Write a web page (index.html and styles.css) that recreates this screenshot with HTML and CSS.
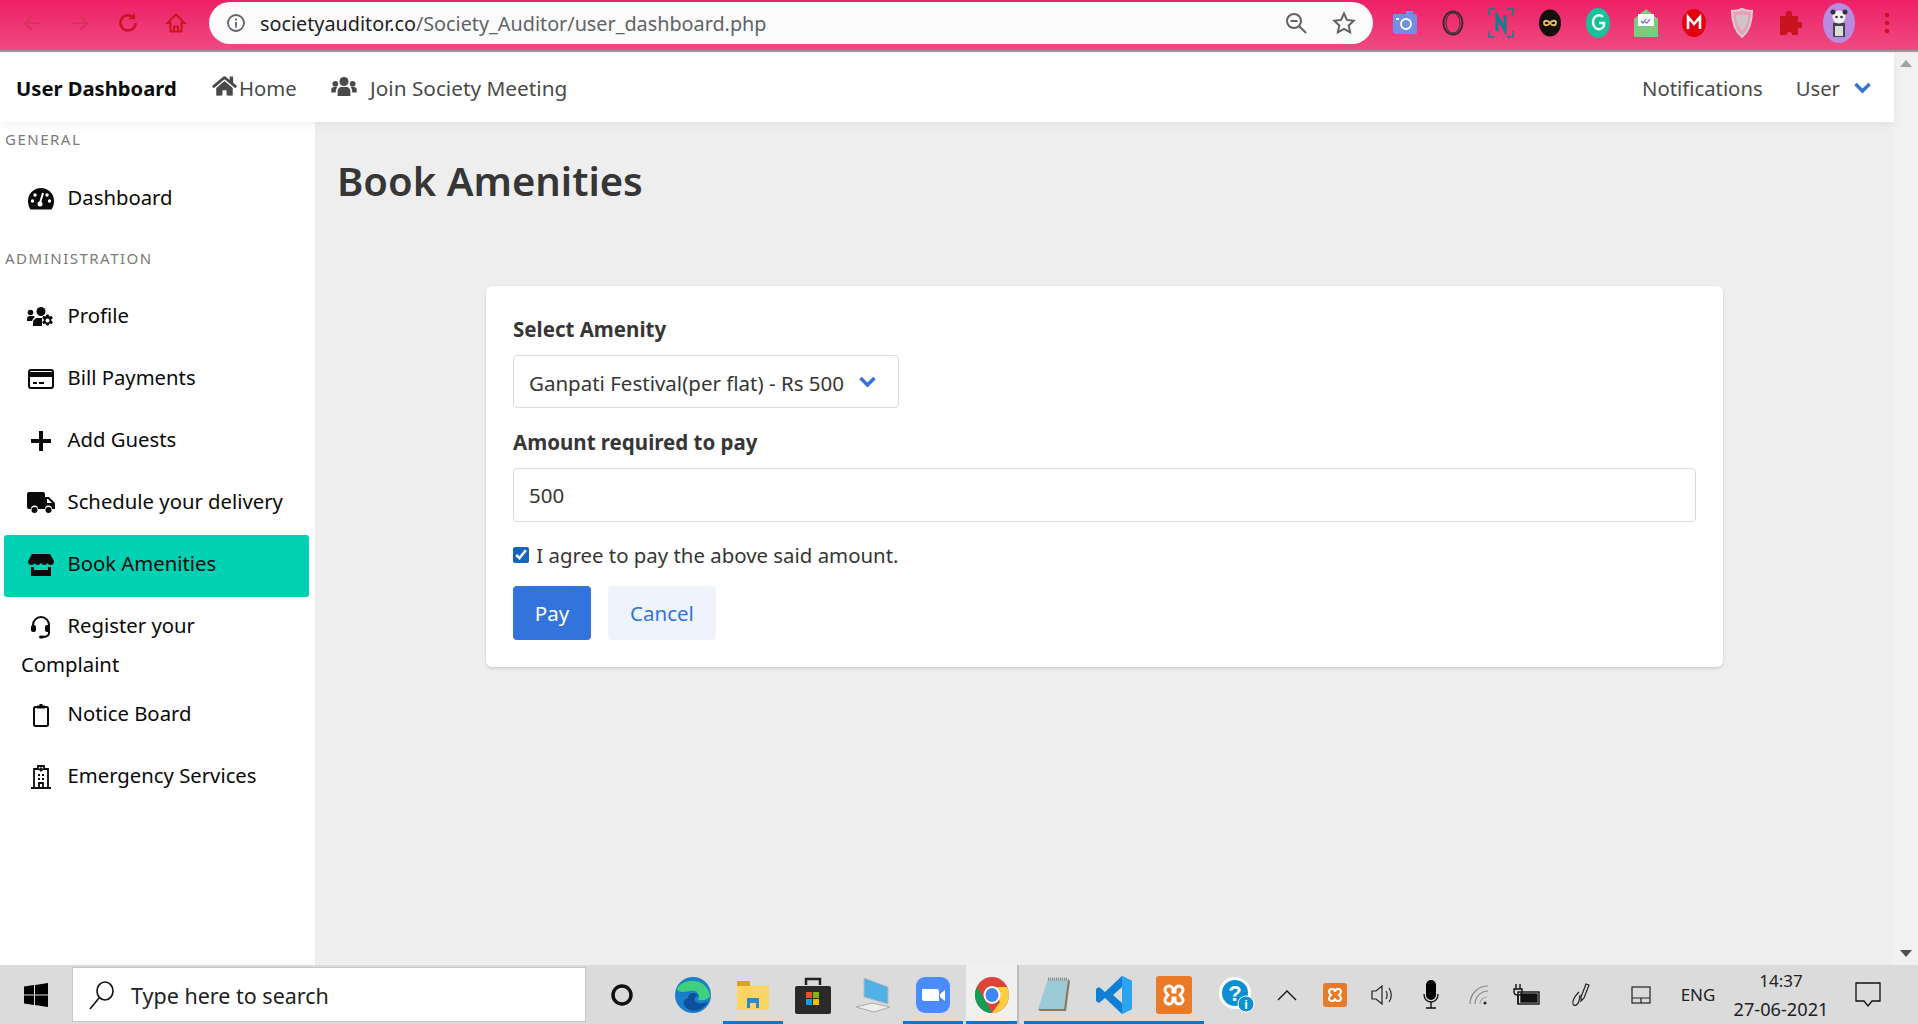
FILE: index.html
```html
<!DOCTYPE html>
<html lang="en">
<head>
    <meta charset="UTF-8">
    <title>User Dashboard</title>
    <link rel="stylesheet" href="styles.css">
</head>
<body>

    <!-- browser toolbar -->
    <div class="chrome-bar">
        <div class="tb-btn"><svg width="22" height="22" viewBox="0 0 22 22" fill="none" stroke="#dd3060" stroke-width="2"><path d="M19 11H4M11 4l-7 7 7 7"/></svg></div>
        <div class="tb-btn"><svg width="22" height="22" viewBox="0 0 22 22" fill="none" stroke="#dd3060" stroke-width="2"><path d="M3 11h15M11 4l7 7-7 7"/></svg></div>
        <div class="tb-btn"><svg width="24" height="24" viewBox="0 0 22 22" fill="none" stroke="#c9141f" stroke-width="2.200"><path d="M18 11a7 7 0 1 1-2-5"/><path d="M17.500 1.500v6h-6z" fill="#c9141f" stroke="none"/></svg></div>
        <div class="tb-btn"><svg width="22" height="24" viewBox="0 0 22 22" fill="none" stroke="#c9141f" stroke-width="2"><path d="M11 2.500L2.500 11H5.500v8.500h11V11h3zM9 19.500v-5h4v5"/></svg></div>
        <div class="omnibox">
            <svg width="20" height="20" viewBox="0 0 20 20" fill="none" stroke="#5f6368" stroke-width="1.800"><circle cx="10" cy="10" r="8"/><path d="M10 9v5.500M10 5.500v2"/></svg>
            <span class="url"><b>societyauditor.co</b>/Society_Auditor/user_dashboard.php</span>
            <svg class="omni-zoom" width="24" height="24" viewBox="0 0 24 24" fill="none" stroke="#5f6368" stroke-width="2"><circle cx="10" cy="10" r="7"/><path d="M6.500 10h7M15 15l7 7"/></svg>
            <svg class="omni-star" width="24" height="24" viewBox="0 0 24 24" fill="none" stroke="#5f6368" stroke-width="2"><path d="M12 2.500l2.900 6.400 6.900.8-5.100 4.700 1.400 6.900-6.100-3.500-6.100 3.500 1.400-6.900-5.100-4.700 6.900-.8z"/></svg>
        </div>
        <div class="extensions">
            <div class="ext"><svg width="24" height="24" viewBox="0 0 24 24"><rect x="0" y="3" width="24" height="20" rx="2" fill="#6f8fe8"/><rect x="13" y="0" width="7" height="4" fill="#6f8fe8"/><circle cx="13" cy="13" r="5" fill="none" stroke="#fff" stroke-width="2"/><rect x="3" y="7" width="3" height="2" fill="#fff"/></svg></div>
            <div class="ext"><svg width="22" height="26" viewBox="0 0 22 26" fill="none" stroke="#3a2a32" stroke-width="2"><ellipse cx="11" cy="13" rx="9.500" ry="11.500"/><ellipse cx="11" cy="13" rx="7" ry="10" stroke-width="1"/></svg></div>
            <div class="ext"><svg width="26" height="30" viewBox="0 0 26 30" fill="none"><path d="M1 7V1h6M19 1h6v6M25 23v6h-6M7 29H1v-6" stroke="#0f7f8c" stroke-width="1.500"/><path d="M9 23V8l8 14V7" stroke="#0f7f8c" stroke-width="3"/></svg></div>
            <div class="ext"><svg width="24" height="28" viewBox="0 0 24 28"><ellipse cx="12" cy="14" rx="11" ry="13.500" fill="#14110d"/><path d="M12 14c-2-3-6-3-6 0s4 3 6 0 6-3 6 0-4 3-6 0z" fill="none" stroke="#e8c15a" stroke-width="1.800"/></svg></div>
            <div class="ext"><svg width="24" height="30" viewBox="0 0 24 30"><ellipse cx="12" cy="15" rx="12" ry="15" fill="#15c39a"/><path d="M17 9a6 7 0 1 0 1 9v-3h-5" fill="none" stroke="#fff" stroke-width="2.400"/></svg></div>
            <div class="ext"><svg width="24" height="28" viewBox="0 0 24 28"><path d="M0 10L12 0l12 10v18H0z" fill="#7fc97f"/><rect x="4" y="5" width="16" height="12" fill="#fff"/><path d="M7 12l2 2 3-4M11 13l2 1 3-4" fill="none" stroke="#5b63d3" stroke-width="1.200"/></svg></div>
            <div class="ext"><svg width="24" height="28" viewBox="0 0 24 28"><ellipse cx="12" cy="14" rx="12" ry="14" fill="#e3000f"/><path d="M6 20V8l6 7 6-7v12" fill="none" stroke="#fff" stroke-width="2.600"/></svg></div>
            <div class="ext"><svg width="22" height="30" viewBox="0 0 22 30"><path d="M11 1c4 2 7 2 10 2 0 12-3 20-10 26C4 23 1 15 1 3c3 0 6 0 10-2z" fill="#e9a0b4" stroke="#d0d0d0" stroke-width="2"/><path d="M5 7h12c0 7-2 12-6 16-4-4-6-9-6-16z" fill="#d0c4c8"/></svg></div>
            <div class="ext"><svg width="22" height="26" viewBox="0 0 22 26"><path d="M0 6h6c-2-7 8-7 6 0h6v6c7-2 7 8 0 6v7h-6c1-4-6-4-5 0H0z" fill="#c9141f"/></svg></div>
            <div class="ext"><svg width="32" height="40" viewBox="0 0 32 40"><ellipse cx="16" cy="20" rx="16" ry="20" fill="#b98ae2"/><rect x="10" y="20" width="12" height="14" fill="#444"/><rect x="12" y="23" width="8" height="10" fill="#ddd"/><circle cx="16" cy="14" r="6.500" fill="#f2f2f2"/><circle cx="10" cy="9" r="2.500" fill="#333"/><circle cx="22" cy="9" r="2.500" fill="#333"/><circle cx="13.500" cy="14" r="1.300" fill="#333"/><circle cx="18.500" cy="14" r="1.300" fill="#333"/></svg></div>
            <div class="ext"><svg width="6" height="24" viewBox="0 0 6 24" fill="#c9141f"><circle cx="3" cy="4" r="2.300"/><circle cx="3" cy="12" r="2.300"/><circle cx="3" cy="20" r="2.300"/></svg></div>
        </div>
    </div>

    <div class="viewport">
        <div class="page">
            <nav class="navbar">
                <div class="brand">User Dashboard</div>
                <a class="nav-link nav-home"><svg width="25" height="22" viewBox="0 0 576 512" fill="#4a4a4a"><path d="M280.37 148.26L96 300.11V464a16 16 0 0 0 16 16l112.06-.29a16 16 0 0 0 15.92-16V368a16 16 0 0 1 16-16h64a16 16 0 0 1 16 16v95.64a16 16 0 0 0 16 16.05L464 480a16 16 0 0 0 16-16V300L295.67 148.26a12.19 12.19 0 0 0-15.3 0zM571.6 251.47L488 182.56V44.05a12 12 0 0 0-12-12h-56a12 12 0 0 0-12 12v72.61L318.47 43a48 48 0 0 0-61 0L4.34 251.47a12 12 0 0 0-1.6 16.9l25.5 31A12 12 0 0 0 45.15 301l235.22-193.74a12.19 12.19 0 0 1 15.3 0L530.9 301a12 12 0 0 0 16.9-1.6l25.5-31a12 12 0 0 0-1.7-16.93z"/></svg>Home</a>
                <a class="nav-link nav-join"><svg width="28" height="20" viewBox="0 0 28 22" fill="#4a4a4a"><circle cx="14" cy="5" r="5"/><circle cx="4.500" cy="7.500" r="3.200"/><circle cx="23.500" cy="7.500" r="3.200"/><path d="M7 21v-5c0-3 2-5 4-5h6c2 0 4 2 4 5v5z"/><path d="M0 17v-3c0-2 1-3 3-3h4c-1.500 1-2 3-2 5v1zM28 17v-3c0-2-1-3-3-3h-4c1.500 1 2 3 2 5v1z"/></svg>Join Society Meeting</a>
                <div class="nav-right">
                    <a class="nav-link">Notifications</a>
                    <a class="nav-link nav-user">User<svg width="17" height="12" viewBox="0 0 17 12" fill="none" stroke="#3273dc" stroke-width="3.500"><path d="M1.500 2l7 7 7-7"/></svg></a>
                </div>
            </nav>

            <div class="content">
                <aside class="sidebar">
                    <p class="menu-label">General</p>
                    <ul class="menu-list">
                        <li><a><span class="icon"><svg width="26" height="22" viewBox="0 0 26 22"><path d="M13 0a13 13 0 0 0-13 13c0 3 .8 6 2.500 8.500h21c1.700-2.500 2.500-5.500 2.500-8.500A13 13 0 0 0 13 0z"/><g fill="#fff"><circle cx="4.500" cy="13" r="1.700"/><circle cx="7" cy="7" r="1.700"/><circle cx="21.500" cy="13" r="1.700"/><circle cx="19" cy="7" r="1.700"/></g><path d="M15 5l-3 10" stroke="#fff" stroke-width="2"/><circle cx="12" cy="16" r="2.500" fill="#fff"/></svg></span>Dashboard</a></li>
                    </ul>
                    <p class="menu-label">Administration</p>
                    <ul class="menu-list">
                        <li><a><span class="icon"><svg width="28" height="20" viewBox="0 0 28 20"><circle cx="14" cy="4.500" r="4.500"/><circle cx="3.500" cy="5.500" r="2.800"/><path d="M0 14v-2c0-2 1-3 3-3h3c1 0 1.500 .5 2 1-1.500 1-2.500 2.500-3 4zM6 19v-3c0-3 2-5 5-5h4v8z"/><path d="M21.500 7.500l1 2 2.300-.6 1 2-1.600 1.600 0 1 1.600 1.600-1 2-2.300-.6-1 2h-2l-1-2-2.300.6-1-2 1.600-1.600 0-1-1.600-1.600 1-2 2.300.6 1-2z"/><circle cx="20.500" cy="13.500" r="2" fill="#fff"/></svg></span>Profile</a></li>
                        <li><a><span class="icon"><svg width="26" height="20" viewBox="0 0 26 20"><rect x="1" y="1" width="24" height="18" rx="2" fill="#fff" stroke="#0a0a0a" stroke-width="2"/><rect x="1" y="3" width="24" height="5"/><rect x="5" y="13" width="4" height="2"/><rect x="11" y="13" width="5" height="2"/></svg></span>Bill Payments</a></li>
                        <li><a><span class="icon"><svg width="20" height="20" viewBox="0 0 20 20"><path d="M8 0h4v8h8v4h-8v8H8v-8H0V8h8z"/></svg></span>Add Guests</a></li>
                        <li><a><span class="icon"><svg width="28" height="22" viewBox="0 0 28 22"><path d="M0 2a2 2 0 0 1 2-2h14a2 2 0 0 1 2 2v3h4l6 6v6h-3a3.500 3.500 0 0 0-7 0h-7a3.500 3.500 0 0 0-7 0H2a2 2 0 0 1-2-2zM20 7v4h5l-4-4z"/><circle cx="7.500" cy="18" r="3"/><circle cx="21.500" cy="18" r="3"/></svg></span>Schedule your delivery</a></li>
                        <li class="is-active"><a><span class="icon"><svg width="26" height="22" viewBox="0 0 26 22"><path d="M4 0h18l4 7c0 2-1 4-3 4s-3-1-3.500-2c-.5 1-2 2-3.300 2S14 10 13 9c-1 1-2 2-3.200 2S7 10 6.500 9C6 10 5 11 3 11S0 9 0 7z"/><path d="M3 13h3v3h14v-3h3v9H3z"/></svg></span>Book Amenities</a></li>
                        <li><a><span class="icon"><svg width="22" height="24" viewBox="0 0 22 24" fill="none" stroke="#0a0a0a" stroke-width="2"><path d="M3 13V10a8 8 0 0 1 16 0v3"/><path d="M19 13v5c0 3-3 4-7 4"/><rect x="1" y="10" width="5" height="7" rx="2" fill="#0a0a0a" stroke="none"/><rect x="15" y="10" width="5" height="7" rx="2" fill="#0a0a0a" stroke="none"/><rect x="9" y="20.500" width="5" height="3" rx="1.500" fill="#0a0a0a" stroke="none"/></svg></span>Register your<br>Complaint</a></li>
                        <li><a><span class="icon"><svg width="18" height="24" viewBox="0 0 18 24" fill="none" stroke="#0a0a0a" stroke-width="2"><rect x="2" y="4" width="14" height="19" rx="1.500"/><path d="M5 4h8M9 1v3" stroke-width="3"/></svg></span>Notice Board</a></li>
                        <li><a><span class="icon"><svg width="20" height="24" viewBox="0 0 20 24" fill="none" stroke="#0a0a0a" stroke-width="1.800"><path d="M3 23V4h4V1h6v3h4v19M0 23h20"/><path d="M10 2.500v4M8 4.500h4M7 10h2M11 10h2M7 14h2M11 14h2M8 23v-5h4v5" /></svg></span>Emergency Services</a></li>
                    </ul>
                </aside>

                <main class="main">
                    <h1 class="title">Book Amenities</h1>
                    <form class="box">
                        <label class="label" for="amenity">Select Amenity</label>
                        <div class="select-wrap">
                            <select id="amenity"><option>Ganpati Festival(per flat) - Rs 500</option></select>
                            <svg class="select-arrow" width="17" height="12" viewBox="0 0 17 12" fill="none" stroke="#3273dc" stroke-width="3.500"><path d="M1.500 2l7 7 7-7"/></svg>
                        </div>
                        <label class="label label-second" for="amount">Amount required to pay</label>
                        <input id="amount" class="input" type="text" value="500">
                        <label class="agree"><input type="checkbox" checked> I agree to pay the above said amount.</label>
                        <div class="buttons">
                            <button type="button" class="btn btn-pay">Pay</button>
                            <button type="button" class="btn btn-cancel">Cancel</button>
                        </div>
                    </form>
                </main>
            </div>
        </div>
        <div class="scrollbar">
            <span class="arrow-up"></span>
            <span class="arrow-down"></span>
        </div>
    </div>

    <!-- windows taskbar -->
    <div class="taskbar">
        <div class="start"><svg width="24" height="24" viewBox="0 0 24 24" fill="#000"><path d="M0 3.500l10-1.400v9.300H0zM11 2l13-2v11.400H11zM0 12.500h10v9.400L0 20.500zM11 12.500h13V24l-13-2z"/></svg></div>
        <div class="search">
            <svg width="26" height="30" viewBox="0 0 26 30" fill="none" stroke="#111" stroke-width="1.600"><ellipse cx="16" cy="11" rx="8" ry="9"/><path d="M10 18L1 29"/></svg>
            <span>Type here to search</span>
        </div>
        <div class="cortana"><svg width="24" height="24" viewBox="0 0 24 24" fill="none" stroke="#111" stroke-width="3.500"><circle cx="12" cy="12" r="9"/></svg></div>
        <div class="task-icon"><svg width="36" height="36" viewBox="0 0 36 36"><circle cx="18" cy="18" r="18" fill="#1a7fc9"/><path d="M2 12C6 2 30-2 35 18c0 4-6 6-12 5 3-5-1-10-7-9-6 0-11 3-14-2z" fill="#3fd07f"/><path d="M13 21c0-5 8-7 10-2-4 0-5 5 0 7 4 1 8 0 10-2-4 9-13 11-18 9-7-3-9-10-2-12z" fill="#0d4f9e"/></svg></div>
        <div class="task-icon running"><svg width="32" height="30" viewBox="0 0 32 30"><path d="M0 3h12l3 3h17v24H0z" fill="#fcd462"/><path d="M0 1h13v5H0z" fill="#dca520"/><path d="M10 28V18h12v10h-3v-5h-6v5z" fill="#2a8ad4"/></svg></div>
        <div class="task-icon"><svg width="36" height="38" viewBox="0 0 36 38"><path d="M11 9V3h14v6" fill="none" stroke="#222" stroke-width="2.500"/><rect y="10" width="36" height="28" rx="2" fill="#2a2a2a"/><rect x="11" y="16" width="6" height="6" fill="#f25022"/><rect x="18" y="16" width="6" height="6" fill="#7fba00"/><rect x="11" y="23" width="6" height="6" fill="#00a4ef"/><rect x="18" y="23" width="6" height="6" fill="#ffb900"/></svg></div>
        <div class="task-icon"><svg width="34" height="36" viewBox="0 0 34 36"><path d="M8 1l24 9v17L8 20z" fill="#4fb1e6" stroke="#bbb"/><path d="M0 30l16-4 18 4-16 5z" fill="#eee" stroke="#aaa"/></svg></div>
        <div class="task-icon running"><svg width="34" height="36" viewBox="0 0 34 36"><rect width="34" height="36" rx="9" fill="#4a8cff"/><path d="M6 12h15a2 2 0 0 1 2 2v10H8a2 2 0 0 1-2-2zM24 17l5-4v11l-5-4z" fill="#fff"/></svg></div>
        <div class="task-icon active"><svg width="34" height="36" viewBox="0 0 34 36"><ellipse cx="17" cy="18" rx="17" ry="18" fill="#db4437"/><path d="M17 36c-9 0-17-8-17-18 0-3 .6-6 2-8l9 15z" fill="#0f9d58"/><path d="M17 36c9 0 17-8 17-18 0-3-.6-5-2-8H17l8 15z" fill="#ffcd40"/><ellipse cx="17" cy="18" rx="8.500" ry="9" fill="#fff"/><ellipse cx="17" cy="18" rx="6.500" ry="7" fill="#4285f4"/></svg></div>
        <div class="divider"></div>
        <div class="task-icon running"><svg width="32" height="36" viewBox="0 0 32 36"><path d="M10 2h20l-4 30H0z" fill="#9ccbd8"/><path d="M26 32l4-30 2 2-4 30H2l-2-2z" fill="#8a7a5a"/><path d="M10 2h20" stroke="#888" stroke-width="3" stroke-dasharray="1 1"/></svg></div>
        <div class="task-icon running"><svg width="36" height="38" viewBox="0 0 36 38"><path d="M26 0l10 5v28l-10 5-17-16-6 5-3-2v-12l3-2 6 5zM26 11l-9 8 9 8z" fill="#0e7fd4"/><path d="M26 0l10 5v28l-10 5z" fill="#2aa4ee"/></svg></div>
        <div class="task-icon running"><svg width="36" height="38" viewBox="0 0 36 38"><rect width="36" height="38" rx="3" fill="#ea7a25"/><path d="M13 10a4 4 0 0 0-4 4c0 2 1 3 3 5-2 2-3 3-3 5a4 4 0 0 0 8 0v-2h2v2a4 4 0 0 0 8 0c0-2-1-3-3-5 2-2 3-3 3-5a4 4 0 0 0-8 0v2h-2v-2a4 4 0 0 0-4-4z" fill="none" stroke="#fff" stroke-width="3"/></svg></div>
        <div class="task-icon help-icon"><svg width="36" height="36" viewBox="0 0 36 36"><ellipse cx="16" cy="16" rx="16" ry="16" fill="#fff"/><circle cx="16" cy="16" r="13" fill="#0a8fd0"/><text x="16" y="24" font-family="Liberation Sans" font-size="22" font-weight="700" text-anchor="middle" fill="#fff">?</text><circle cx="27" cy="27" r="8" fill="#0a8fd0" stroke="#fff"/><text x="27" y="32" font-family="Liberation Sans" font-size="13" font-weight="700" text-anchor="middle" fill="#fff">i</text></svg></div>
        <div class="tray">
            <div class="tray-icon tray-chevron"><svg width="20" height="12" viewBox="0 0 20 12" fill="none" stroke="#111" stroke-width="1.400"><path d="M1 11l9-9 9 9"/></svg></div>
            <div class="tray-icon"><svg width="24" height="24" viewBox="0 0 24 24"><rect width="24" height="24" rx="3" fill="#ea7a25"/><path d="M9 6a3 3 0 0 0-3 3c0 1 1 2 2 3-1 1-2 2-2 3a3 3 0 0 0 6 0 3 3 0 0 0 6 0c0-1-1-2-2-3 1-1 2-2 2-3a3 3 0 0 0-6 0 3 3 0 0 0-3-3z" fill="none" stroke="#fff" stroke-width="2"/></svg></div>
            <div class="tray-icon"><svg width="24" height="24" viewBox="0 0 24 24" fill="none" stroke="#222" stroke-width="1.200"><path d="M1 8h4l6-5v18l-6-5H1zM15 8c1.500 2 1.500 6 0 8M18 5c3 4 3 10 0 14"/></svg></div>
            <div class="tray-icon"><svg width="16" height="30" viewBox="0 0 16 30"><rect x="3" y="0" width="10" height="20" rx="5"/><path d="M1 14c0 5 3 8 7 8s7-3 7-8M8 22v6M3 28h10" fill="none" stroke="#111" stroke-width="1.400"/></svg></div>
            <div class="tray-icon"><svg width="20" height="20" viewBox="0 0 20 20" fill="none" stroke="#888" stroke-width="1.200"><path d="M1 19C1 9 9 1 19 1M6 19c0-7 6-13 13-13"/><path d="M11 19c0-4 3-7 7-7" stroke="#aaa"/><circle cx="16" cy="18" r="1.500" fill="#222" stroke="none"/></svg></div>
            <div class="tray-icon"><svg width="28" height="24" viewBox="0 0 28 24" fill="none" stroke="#111" stroke-width="1.400"><path d="M3 1v5M7 1v5M1 6h8v3c0 2-2 3-4 3s-4-1-4-3zM5 12v9"/><rect x="5" y="9" width="21" height="12"/><rect x="8" y="11" width="16" height="8" fill="#111"/></svg></div>
            <div class="tray-icon tray-pen"><svg width="20" height="26" viewBox="0 0 20 26" fill="none" stroke="#222" stroke-width="1.200"><path d="M10 15l5-13 3 1-5 13-3 3zM8 10c-4 4-7 8-6 12 1 3 5 1 6-3l1-6"/></svg></div>
            <div class="tray-icon tray-pad"><svg width="20" height="18" viewBox="0 0 20 18" fill="none" stroke="#222" stroke-width="1.200"><rect x="1" y="1" width="18" height="16"/><path d="M1 12h18M10 12v5"/></svg></div>
            <div class="eng">ENG</div>
            <div class="clock"><span>14:37</span><span class="clock-date">27-06-2021</span></div>
            <div class="tray-icon tray-note"><svg width="26" height="26" viewBox="0 0 26 26" fill="none" stroke="#111" stroke-width="1.300"><path d="M1 1h24v18h-8l-4 5-4-5H1z"/></svg></div>
        </div>
    </div>

</body>
</html>
```

FILE: styles.css
```css
* {
    box-sizing: border-box;
}

html, body {
    height: 100%;
    margin: 0;
    overflow: hidden;
}

body {
    display: flex;
    flex-direction: column;
    font-family: "Noto Sans", "Open Sans", sans-serif;
    font-size: 20px;
    color: #0a0a0a;
    background-color: #eeeeee;
}

/* browser toolbar */
.chrome-bar {
    display: flex;
    align-items: center;
    flex: 0 0 52px;
    height: 52px;
    padding: 0 0 4px 8px;
    background: linear-gradient(#ee2066, #ee4a80);
    border-bottom: 2px solid #9a9a9a;
}

.tb-btn {
    display: flex;
    align-items: center;
    justify-content: center;
    width: 48px;
}

.omnibox {
    display: flex;
    align-items: center;
    width: 1164px;
    height: 42px;
    margin-left: 9px;
    padding: 0 17px;
    border-radius: 21px;
    background-color: #fbfbfb;
}

.url {
    margin-left: 14px;
    font-size: 19.8px;
    color: #5f6368;
    white-space: nowrap;
}

.url b {
    font-weight: 400;
    color: #202124;
}

.omni-zoom {
    margin-left: auto;
}

.omni-star {
    margin-left: 24px;
}

.extensions {
    display: flex;
    margin-left: 8px;
}

.ext {
    display: flex;
    align-items: center;
    justify-content: center;
    width: 48.2px;
}

/* page */
.viewport {
    display: flex;
    flex: 1;
    min-height: 0;
}

.page {
    display: flex;
    flex-direction: column;
    flex: 1;
    min-width: 0;
}

.scrollbar {
    display: flex;
    flex-direction: column;
    justify-content: space-between;
    align-items: center;
    width: 24px;
    padding: 8px 0;
    background-color: #f1f1f1;
}

.arrow-up,
.arrow-down {
    width: 0;
    height: 0;
    border-left: 6px solid transparent;
    border-right: 6px solid transparent;
}

.arrow-up {
    border-bottom: 7px solid #a3a3a3;
}

.arrow-down {
    border-top: 7px solid #505050;
}

.navbar {
    position: relative;
    z-index: 2;
    display: flex;
    align-items: center;
    flex: 0 0 70px;
    padding: 2px 0 0 16px;
    background-color: #ffffff;
    box-shadow: 0 2px 10px rgba(0, 0, 0, 0.06);
}

.brand {
    width: 196px;
    font-size: 20.2px;
    font-weight: 700;
    white-space: nowrap;
}

.nav-link {
    display: flex;
    align-items: center;
    font-size: 20.3px;
    color: #4a4a4a;
    white-space: nowrap;
}

.nav-home svg {
    margin-right: 2px;
    margin-top: -5px;
}

.nav-home {
    width: 118px;
}

.nav-join {
    font-size: 20.8px;
}

.nav-join svg {
    margin-right: 12px;
    margin-top: -2px;
}

.nav-right {
    display: flex;
    align-items: center;
    margin-left: auto;
    gap: 33px;
    padding-right: 23px;
}

.nav-user svg {
    margin-left: 14px;
}

.content {
    display: flex;
    flex: 1;
    min-height: 0;
}

.sidebar {
    flex: 0 0 315px;
    padding: 7px 6px 0 4px;
    background-color: #ffffff;
}

.menu-label {
    height: 20px;
    margin: 0 0 19px 0;
    padding-left: 1px;
    font-size: 15px;
    line-height: 20px;
    letter-spacing: 1.5px;
    text-transform: uppercase;
    color: #7a7a7a;
}

.menu-label:first-child {
    margin-bottom: 20px;
}

.menu-list {
    margin: 0 0 17px 0;
    padding: 0;
    list-style: none;
}

.menu-list a {
    display: block;
    padding: 8px 0 8px 17px;
    font-size: 20.3px;
    line-height: 26px;
    border-radius: 3px;
}

.icon {
    display: inline-flex;
    align-items: center;
    justify-content: center;
    width: 46.5px;
    height: 46px;
    vertical-align: middle;
    fill: #0a0a0a;
}

.icon svg {
    margin: 0 7px 2px 0;
}

.is-active a {
    background-color: #00d1b2;
}

.main {
    flex: 1;
    min-width: 0;
    padding: 0 171px;
}

.title {
    margin: 32px 0 0 -149px;
    height: 132px;
    font-size: 40px;
    line-height: 54px;
    font-weight: 600;
    color: #363636;
}

.box {
    padding: 28px 27px 27px 27px;
    border-radius: 6px;
    background-color: #ffffff;
    box-shadow: 0 2px 3px rgba(10, 10, 10, 0.1), 0 0 0 1px rgba(10, 10, 10, 0.02);
    color: #363636;
}

.label {
    display: block;
    height: 30px;
    margin-bottom: 11px;
    font-size: 20.5px;
    line-height: 30px;
    font-weight: 700;
}

.label-second {
    margin-top: 19px;
}

.select-wrap {
    position: relative;
    width: 386px;
    height: 53px;
}

select,
.input {
    display: block;
    width: 100%;
    border: 1px solid #dbdbdb;
    border-radius: 4px;
    padding: 0 15px;
    font-family: inherit;
    font-size: 20.5px;
    color: #363636;
    background-color: #ffffff;
    outline: none;
}

select {
    height: 53px;
    padding-top: 2px;
    appearance: none;
}

.select-arrow {
    position: absolute;
    right: 23px;
    top: 21px;
}

.input {
    height: 54px;
}

.agree {
    display: flex;
    align-items: center;
    height: 30px;
    margin-top: 18px;
    font-size: 20.4px;
    white-space: pre;
}

.agree input {
    width: 16px;
    height: 16px;
    margin: 0 2px 0 0;
    accent-color: #1565c0;
}

.buttons {
    display: flex;
    gap: 17px;
    margin-top: 16px;
}

.btn {
    height: 54px;
    border: none;
    border-radius: 4px;
    font-family: inherit;
    font-size: 20.5px;
}

.btn-pay {
    width: 78px;
    color: #ffffff;
    background-color: #3273dc;
}

.btn-cancel {
    width: 108px;
    color: #3273dc;
    background-color: #eef3fc;
}

/* windows taskbar */
.taskbar {
    display: flex;
    align-items: center;
    flex: 0 0 59px;
    height: 59px;
    background-color: #dbdbdb;
}

.start {
    display: flex;
    align-items: center;
    justify-content: center;
    width: 72px;
}

.search {
    display: flex;
    align-items: center;
    width: 514px;
    height: 55px;
    padding: 2px 0 0 16px;
    border: 1px solid #c8c8c8;
    background-color: #ffffff;
    font-size: 21.5px;
    color: #222222;
}

.search span {
    margin-left: 16px;
}

.search svg {
    margin-top: -2px;
}

.cortana {
    display: flex;
    justify-content: center;
    width: 72px;
    margin-right: 5px;
}

.task-icon {
    display: flex;
    align-items: center;
    justify-content: center;
    width: 60px;
    height: 59px;
    padding-top: 3px;
    border-bottom: 3px solid transparent;
}

.running {
    border-bottom-color: #0078d7;
}

.active {
    width: 51px;
    margin-left: 3px;
    background-color: #f0f0f0;
    border-bottom-color: #0078d7;
}

.divider {
    width: 7px;
    height: 59px;
    border-left: 2px solid #bdbdbd;
    background-color: #dbdbdb;
}

.help-icon {
    width: 66px;
}

.tray {
    display: flex;
    align-items: center;
    flex: 1;
}

.tray-icon {
    display: flex;
    align-items: center;
    justify-content: center;
    width: 48px;
}

.tray-chevron {
    margin-left: -7px;
}

.tray-pen {
    margin-left: 6px;
}

.tray-pad {
    margin-left: 12px;
}

.tray-note {
    margin-left: 13px;
}

.eng {
    width: 66px;
    text-align: center;
    font-size: 17px;
    color: #222222;
}

.clock {
    display: flex;
    flex-direction: column;
    align-items: center;
    width: 100px;
    font-size: 17px;
    line-height: 28px;
    color: #222222;
}

.clock-date {
    font-size: 18.2px;
}
```
